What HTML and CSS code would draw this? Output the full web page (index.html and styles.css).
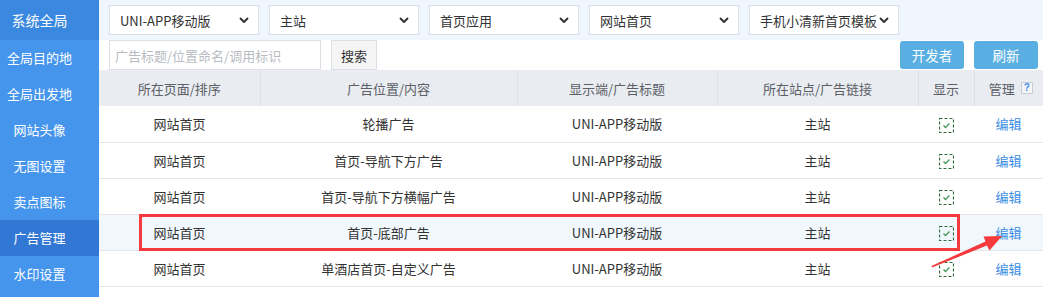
FILE: index.html
```html
<!DOCTYPE html>
<html lang="zh-CN">
<head>
    <meta charset="UTF-8">
    <title>广告管理</title>
    <link rel="stylesheet" href="styles.css">
</head>
<body>
    <div class="page">
        <div class="sidebar">
            <div class="side-item side-title">系统全局</div>
            <div class="side-item">全局目的地</div>
            <div class="side-item">全局出发地</div>
            <div class="side-item">网站头像</div>
            <div class="side-item">无图设置</div>
            <div class="side-item">卖点图标</div>
            <div class="side-item active">广告管理</div>
            <div class="side-item">水印设置</div>
        </div>

        <div class="main">
            <div class="filter-bar">
                <div class="select"><span>UNI-APP移动版</span><svg class="chev" width="10" height="6" viewBox="0 0 10 6"><polyline points="1,1 5,5 9,1"/></svg></div>
                <div class="select"><span>主站</span><svg class="chev" width="10" height="6" viewBox="0 0 10 6"><polyline points="1,1 5,5 9,1"/></svg></div>
                <div class="select"><span>首页应用</span><svg class="chev" width="10" height="6" viewBox="0 0 10 6"><polyline points="1,1 5,5 9,1"/></svg></div>
                <div class="select"><span>网站首页</span><svg class="chev" width="10" height="6" viewBox="0 0 10 6"><polyline points="1,1 5,5 9,1"/></svg></div>
                <div class="select"><span>手机小清新首页模板</span><svg class="chev" width="10" height="6" viewBox="0 0 10 6"><polyline points="1,1 5,5 9,1"/></svg></div>
            </div>

            <div class="toolbar">
                <input class="search-input" type="text" placeholder="广告标题/位置命名/调用标识">
                <button class="search-btn">搜索</button>
                <div class="spacer"></div>
                <button class="blue-btn">开发者</button>
                <button class="blue-btn">刷新</button>
            </div>

            <table class="ad-table">
                <colgroup>
                    <col style="width:161px">
                    <col style="width:257px">
                    <col style="width:200px">
                    <col style="width:201px">
                    <col style="width:56px">
                    <col>
                </colgroup>
                <thead>
                    <tr>
                        <th>所在页面/排序</th>
                        <th>广告位置/内容</th>
                        <th>显示端/广告标题</th>
                        <th>所在站点/广告链接</th>
                        <th>显示</th>
                        <th><span class="manage">管理 <span class="help">?</span></span></th>
                    </tr>
                </thead>
                <tbody>
                    <tr>
                        <td>网站首页</td>
                        <td>轮播广告</td>
                        <td>UNI-APP移动版</td>
                        <td>主站</td>
                        <td><svg class="check" width="15" height="15" viewBox="0 0 15 15"><rect x="0.5" y="0.5" width="14" height="14"/><polyline points="4.5,7.5 6.5,9.5 10.5,5.5"/></svg></td>
                        <td><a class="edit" href="#">编辑</a></td>
                    </tr>
                    <tr>
                        <td>网站首页</td>
                        <td>首页-导航下方广告</td>
                        <td>UNI-APP移动版</td>
                        <td>主站</td>
                        <td><svg class="check" width="15" height="15" viewBox="0 0 15 15"><rect x="0.5" y="0.5" width="14" height="14"/><polyline points="4.5,7.5 6.5,9.5 10.5,5.5"/></svg></td>
                        <td><a class="edit" href="#">编辑</a></td>
                    </tr>
                    <tr>
                        <td>网站首页</td>
                        <td>首页-导航下方横幅广告</td>
                        <td>UNI-APP移动版</td>
                        <td>主站</td>
                        <td><svg class="check" width="15" height="15" viewBox="0 0 15 15"><rect x="0.5" y="0.5" width="14" height="14"/><polyline points="4.5,7.5 6.5,9.5 10.5,5.5"/></svg></td>
                        <td><a class="edit" href="#">编辑</a></td>
                    </tr>
                    <tr class="hover">
                        <td>网站首页</td>
                        <td>首页-底部广告</td>
                        <td>UNI-APP移动版</td>
                        <td>主站</td>
                        <td><svg class="check" width="15" height="15" viewBox="0 0 15 15"><rect x="0.5" y="0.5" width="14" height="14"/><polyline points="4.5,7.5 6.5,9.5 10.5,5.5"/></svg></td>
                        <td><a class="edit" href="#">编辑</a></td>
                    </tr>
                    <tr>
                        <td>网站首页</td>
                        <td>单酒店首页-自定义广告</td>
                        <td>UNI-APP移动版</td>
                        <td>主站</td>
                        <td><svg class="check" width="15" height="15" viewBox="0 0 15 15"><rect x="0.5" y="0.5" width="14" height="14"/><polyline points="4.5,7.5 6.5,9.5 10.5,5.5"/></svg></td>
                        <td><a class="edit" href="#">编辑</a></td>
                    </tr>
                </tbody>
            </table>
        </div>
    </div>

    <!-- annotation drawn on top of the screenshot -->
    <svg class="annotation" width="1043" height="297" viewBox="0 0 1043 297">
        <rect class="mark-box" x="140.5" y="215.5" width="818" height="34"/>
        <polygon class="mark-arrow" points="932,267.5 987,245.5 989.5,250.5 1002,236 983.5,236.5 985.5,241.5 931.5,266"/>
    </svg>
</body>
</html>
```

FILE: styles.css
```css
* {
    margin: 0;
    padding: 0;
    box-sizing: border-box;
}

body {
    font-family: "Noto Sans CJK SC", "Noto Sans", sans-serif;
    font-size: 13px;
    color: #333;
    background: #fff;
    width: 1043px;
    height: 297px;
    overflow: hidden;
    position: relative;
}

.page {
    display: flex;
    height: 297px;
}

/* sidebar */
.sidebar {
    width: 99px;
    flex-shrink: 0;
    background: #4595ed;
}

.side-item {
    height: 36px;
    line-height: 36px;
    color: #fff;
    text-align: center;
    padding-right: 20px;
}

.side-title {
    height: 40px;
    line-height: 40px;
    font-size: 14px;
    background: #3b88e1;
}

.side-item.active {
    background: #3277d4;
}

/* main area */
.main {
    flex: 1;
    min-width: 0;
}

.filter-bar {
    height: 40px;
    background: #eff6fd;
    display: flex;
    align-items: center;
    gap: 10px;
    padding: 0 10px;
}

.select {
    width: 150px;
    height: 30px;
    background: #fff;
    border: 1px solid #dcdfe3;
    display: flex;
    align-items: center;
    justify-content: space-between;
    padding: 0 9px 0 10px;
    font-size: 13px;
    white-space: nowrap;
}

.chev {
    flex-shrink: 0;
}

.chev polyline {
    fill: none;
    stroke: #333;
    stroke-width: 2;
}

.toolbar {
    height: 30px;
    display: flex;
    align-items: center;
    padding: 0 5px 0 10px;
}

.search-input {
    width: 212px;
    height: 30px;
    border: 1px solid #dcdfe3;
    padding: 0 5px;
    font-family: inherit;
    font-size: 13px;
    outline: none;
}

.search-input::placeholder {
    color: #b8bcc2;
}

.search-btn {
    margin-left: 10px;
    width: 46px;
    height: 30px;
    border: 1px solid #dcdfe3;
    background: #f5f5f5;
    color: #333;
    font-family: inherit;
    font-size: 13px;
}

.spacer {
    flex: 1;
}

.blue-btn {
    height: 28px;
    border: none;
    border-radius: 3px;
    background: #5aafe2;
    color: #fff;
    font-family: inherit;
    font-size: 13.5px;
    margin-left: 10px;
    width: 64px;
}

.blue-btn:first-of-type {
    width: 76px;
}

/* table */
.ad-table {
    width: 944px;
    border-collapse: collapse;
    table-layout: fixed;
}

.ad-table th {
    height: 36px;
    background: #e9ecf1;
    color: #5c6066;
    font-weight: normal;
    border-left: 1px solid #dde1e6;
}

.ad-table th:first-child {
    border-left: none;
}

.ad-table td {
    height: 36px;
    text-align: center;
    border-bottom: 1px solid #e4e6ea;
}

.ad-table tr.hover td {
    background: #f0f7fd;
}

.manage {
    display: inline-flex;
    align-items: center;
    gap: 6px;
    padding-left: 4px;
}

.help {
    width: 12px;
    height: 12px;
    border: 1px solid #c9ccd1;
    background: #f4f6f8;
    color: #3a8ee6;
    font-size: 10px;
    font-weight: bold;
    line-height: 10px;
    text-align: center;
    font-family: "Liberation Sans", sans-serif;
}

.check {
    display: inline-block;
    vertical-align: middle;
}

.check rect {
    fill: none;
    stroke: #2f6b3c;
    stroke-width: 1.2;
    stroke-dasharray: 3 2;
}

.check polyline {
    fill: none;
    stroke: #4a9a5c;
    stroke-width: 1.4;
}

.edit {
    color: #3c8ee3;
    text-decoration: none;
}

/* annotation overlay */
.annotation {
    position: absolute;
    left: 0;
    top: 0;
    pointer-events: none;
}

.mark-box {
    fill: none;
    stroke: #f43a3c;
    stroke-width: 3;
}

.mark-arrow {
    fill: #f43a3c;
}
```
